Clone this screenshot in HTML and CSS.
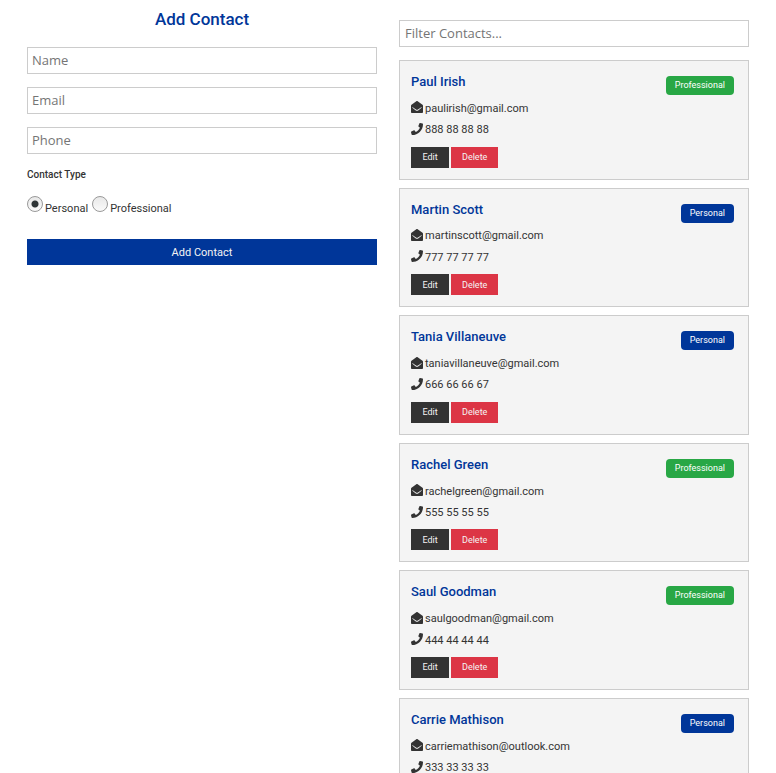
FILE: index.html
```
<!DOCTYPE html>
<html lang="en">
<head>
<meta charset="utf-8">
<title>Contacts</title>
<link rel="stylesheet" href="styles.css">
</head>
<body>
<svg class="sprite">
  <symbol id="mail" viewBox="0 0 512 512"><path fill="currentColor" d="M512 464c0 26.510-21.490 48-48 48H48c-26.510 0-48-21.490-48-48V200.724a48 48 0 0 1 18.387-37.776c24.913-19.529 45.501-35.365 164.200-121.511C199.412 29.170 232.797-.347 256 .003c23.198-.354 56.596 29.172 73.413 41.433 118.687 86.137 139.303 101.995 164.200 121.512A48 48 0 0 1 512 200.724V464zm-65.666-196.605c-2.563-3.728-7.700-4.595-11.339-1.907-22.845 16.873-55.462 40.705-105.582 77.079-16.825 12.266-50.210 41.781-73.413 41.430-23.211.344-56.559-29.143-73.413-41.430-50.114-36.370-82.734-60.204-105.582-77.079-3.639-2.688-8.776-1.821-11.339 1.907l-9.072 13.196a7.998 7.998 0 0 0 1.839 10.967c22.887 16.899 55.454 40.690 105.303 76.868 20.274 14.781 56.524 47.813 92.264 47.573 35.724.242 71.961-32.771 92.263-47.573 49.850-36.179 82.418-59.970 105.303-76.868a7.998 7.998 0 0 0 1.839-10.967l-9.071-13.196z"/></symbol>
  <symbol id="phone" viewBox="0 0 512 512"><path fill="currentColor" d="M493.400 24.600l-104-24c-11.300-2.600-22.900 3.300-27.500 13.900l-48 112c-4.200 9.800-1.400 21.300 6.900 28l60.600 49.600c-36 76.700-98.900 140.500-177.200 177.200l-49.600-60.600c-6.800-8.300-18.200-11.100-28-6.900l-112 48C3.900 366.500-2 378.100.6 389.400l24 104C27.100 504.200 36.700 512 48 512c256.100 0 464-207.500 464-464 0-11.200-7.700-20.900-18.600-23.400z"/></symbol>
</svg>
<main class="page">
  <form class="form">
    <h1 class="form-title">Add Contact</h1>
    <input class="field" type="text" placeholder="Name" aria-label="Name">
    <input class="field" type="email" placeholder="Email" aria-label="Email">
    <input class="field" type="tel" placeholder="Phone" aria-label="Phone">
    <h2 class="type-title">Contact Type</h2>
    <div class="types">
      <input class="radio" type="radio" name="type" id="personal" checked><label for="personal">Personal</label>
      <input class="radio" type="radio" name="type" id="professional"><label for="professional">Professional</label>
    </div>
    <button class="submit" type="button">Add Contact</button>
  </form>
  <section class="contacts">
    <input class="field filter" type="text" placeholder="Filter Contacts..." aria-label="Filter Contacts">
    <article class="card">
      <div class="card-head"><h3 class="name">Paul Irish</h3><span class="badge badge-pro">Professional</span></div>
      <ul class="details"><li><svg class="icon"><use href="#mail"/></svg>paulirish@gmail.com</li><li><svg class="icon"><use href="#phone"/></svg>888 88 88 88</li></ul>
      <div class="actions"><button class="btn" type="button">Edit</button><button class="btn btn-danger" type="button">Delete</button></div>
    </article>
    <article class="card">
      <div class="card-head"><h3 class="name">Martin Scott</h3><span class="badge">Personal</span></div>
      <ul class="details"><li><svg class="icon"><use href="#mail"/></svg>martinscott@gmail.com</li><li><svg class="icon"><use href="#phone"/></svg>777 77 77 77</li></ul>
      <div class="actions"><button class="btn" type="button">Edit</button><button class="btn btn-danger" type="button">Delete</button></div>
    </article>
    <article class="card">
      <div class="card-head"><h3 class="name">Tania Villaneuve</h3><span class="badge">Personal</span></div>
      <ul class="details"><li><svg class="icon"><use href="#mail"/></svg>taniavillaneuve@gmail.com</li><li><svg class="icon"><use href="#phone"/></svg>666 66 66 67</li></ul>
      <div class="actions"><button class="btn" type="button">Edit</button><button class="btn btn-danger" type="button">Delete</button></div>
    </article>
    <article class="card">
      <div class="card-head"><h3 class="name">Rachel Green</h3><span class="badge badge-pro">Professional</span></div>
      <ul class="details"><li><svg class="icon"><use href="#mail"/></svg>rachelgreen@gmail.com</li><li><svg class="icon"><use href="#phone"/></svg>555 55 55 55</li></ul>
      <div class="actions"><button class="btn" type="button">Edit</button><button class="btn btn-danger" type="button">Delete</button></div>
    </article>
    <article class="card">
      <div class="card-head"><h3 class="name">Saul Goodman</h3><span class="badge badge-pro">Professional</span></div>
      <ul class="details"><li><svg class="icon"><use href="#mail"/></svg>saulgoodman@gmail.com</li><li><svg class="icon"><use href="#phone"/></svg>444 44 44 44</li></ul>
      <div class="actions"><button class="btn" type="button">Edit</button><button class="btn btn-danger" type="button">Delete</button></div>
    </article>
    <article class="card">
      <div class="card-head"><h3 class="name">Carrie Mathison</h3><span class="badge">Personal</span></div>
      <ul class="details"><li><svg class="icon"><use href="#mail"/></svg>carriemathison@outlook.com</li><li><svg class="icon"><use href="#phone"/></svg>333 33 33 33</li></ul>
      <div class="actions"><button class="btn" type="button">Edit</button><button class="btn btn-danger" type="button">Delete</button></div>
    </article>
  </section>
</main>
</body>
</html>
```
FILE: styles.css
```
* { box-sizing: border-box; margin: 0; padding: 0; }
html { scrollbar-width: none; }
body { background: #fff; color: #333; font: 11px/1.4 Roboto, sans-serif; }
button { border: 0; font-family: inherit; color: #f4f4f4; cursor: pointer; }
.sprite { display: none; }

.page { display: grid; grid-template-columns: 1fr 1fr; gap: 22px; align-items: start; padding: 0 27px; }

.form { padding-top: 7px; }
.form-title { font-size: 17px; font-weight: 500; line-height: 24px; color: #003699; text-align: center; margin-bottom: 16px; }
.field {
  display: block; width: 100%; height: 27px; margin-bottom: 13px; padding: 0 4px 1px;
  border: 1px solid #ccc; background: #fff; color: #333;
  font: 13px "Open Sans", "Noto Sans", sans-serif;
}
.filter { padding: 0 5px 1px; }
.field::placeholder { color: #757575; opacity: 1; }
.type-title { font-size: 10px; font-weight: 500; line-height: 16px; margin-bottom: 13px; }
.types { display: flex; align-items: baseline; gap: 2px; line-height: 16px; margin-bottom: 22px; }
.types label { margin-right: 2px; }
.radio {
  appearance: none; width: 16px; height: 16px; border: 1px solid #999; border-radius: 50%;
  background: linear-gradient(#e8e8e8, #fafafa);
}
.radio:checked { background: radial-gradient(circle, #2e3436 0 3px, transparent 4px), linear-gradient(#e8e8e8, #fafafa); }
.submit { display: block; width: 100%; height: 26px; background: #003699; font-size: 11px; }

.contacts { padding-top: 20px; }
.card { border: 1px solid #ccc; background: #f4f4f4; padding: 11px; margin-bottom: 8px; }
.card-head { display: flex; justify-content: space-between; align-items: flex-start; margin-bottom: 8px; padding-right: 3px; }
.name { font-size: 13px; font-weight: 500; line-height: 1.6; color: #003699; }
.badge { margin: 4px 0 -4px; padding: 0 9px; border-radius: 4px; background: #003699; color: #fff; font-size: 9px; line-height: 19px; }
.badge-pro { background: #28a745; }
.details { display: grid; gap: 6px; margin-bottom: 9px; list-style: none; }
.details li { display: flex; align-items: center; gap: 2px; }
.icon { width: 12px; height: 12px; margin-bottom: 2px; }
.actions { display: flex; gap: 2px; }
.btn { min-width: 38px; height: 21px; padding: 0 11px; background: #333; font-size: 9px; }
.btn-danger { background: #dc3545; }
```
